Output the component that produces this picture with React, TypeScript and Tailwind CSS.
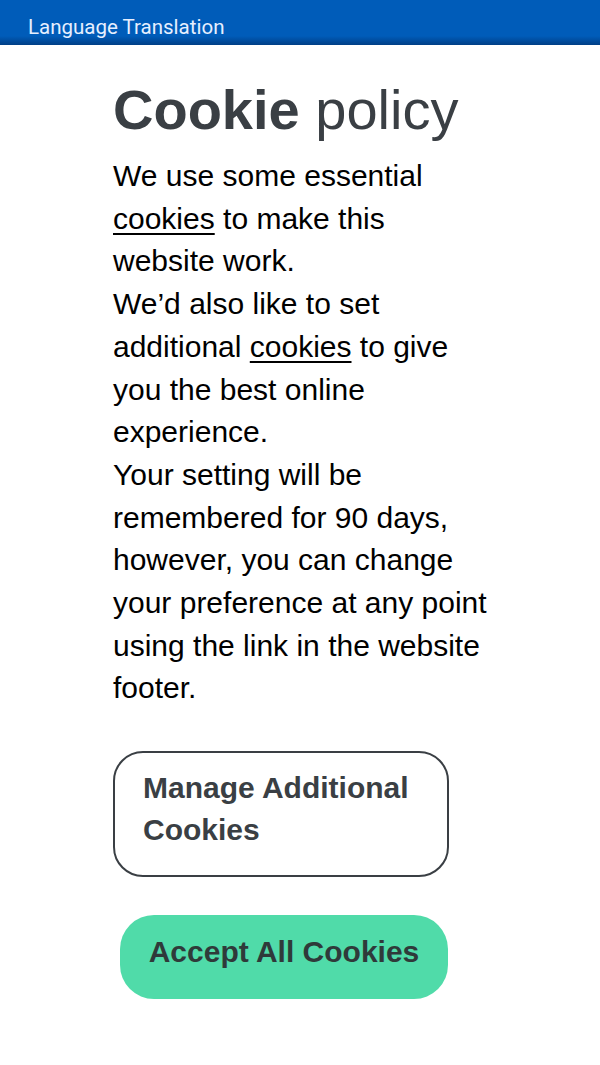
import React from "react";

export default function App() {
  return (
    <div className="w-[600px] min-h-[1065px] bg-white" style={{ fontFamily: '"Liberation Sans", Arial, sans-serif' }}>
      <div className="h-[45px] bg-gradient-to-b from-[#005cb9] from-[80%] to-[#003f86] flex items-center pl-[28px]">
        <span className="text-[20.5px] text-[#e6efff] font-['Roboto',sans-serif] leading-none mt-[10px]">Language Translation</span>
      </div>
      <div className="pl-[113px] pr-[106px]">
        <h1 className="mt-[37px] text-[56px] leading-none text-[#3a3f44] whitespace-nowrap">
          <span className="font-bold">Cookie</span> policy
        </h1>
        <div className="mt-[17px] text-[30px] leading-[42.7px] text-black">
          <p>
            We use some essential <span className="underline underline-offset-[4px] decoration-[1.5px]">cookies</span> to make this website work.
          </p>
          <p>
            We’d also like to set additional <span className="underline underline-offset-[4px] decoration-[1.5px]">cookies</span> to give you the best online experience.
          </p>
          <p>
            Your setting will be remembered for 90 days, however, you can change your preference at any point using the link in the website footer.
          </p>
        </div>
        <div className="mt-[41px] w-[336px] rounded-[30px] border-2 border-[#3a3f44] pl-[28px] pr-[20px] pt-[14px] pb-[24px] text-[30px] leading-[42px] font-bold text-[#3a3f44]">
          Manage Additional Cookies
        </div>
        <div className="mt-[38px] ml-[7px] w-[328px] h-[84px] rounded-[34px] bg-[#50dba9] flex items-center justify-center text-[30px] font-bold text-[#2f3a3a] pb-[12px]">
          Accept All Cookies
        </div>
      </div>
    </div>
  );
}
